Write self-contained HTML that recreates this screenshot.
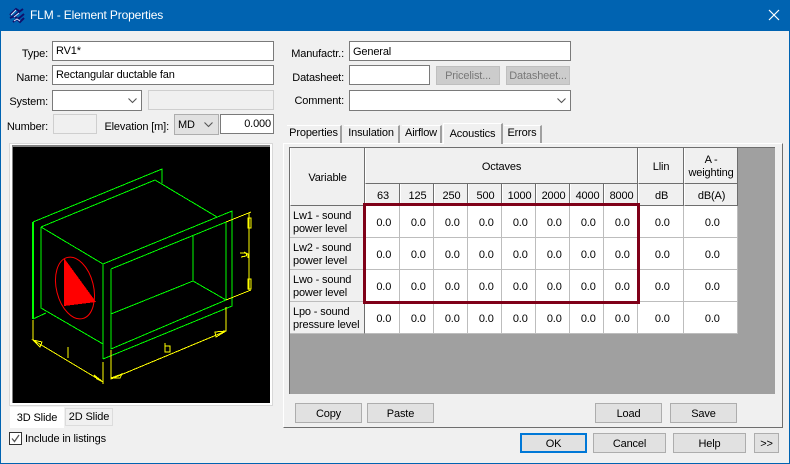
<!DOCTYPE html>
<html><head><meta charset="utf-8"><style>
html,body{margin:0;padding:0}
body{width:790px;height:464px;overflow:hidden;background:#f0f0f0;position:relative;font-family:"Liberation Sans",sans-serif;font-size:11px;letter-spacing:-.15px;color:#000}
div,span{position:absolute;box-sizing:border-box;white-space:nowrap}
.l{height:14px;line-height:16px;text-align:right}
.i{background:#fff;border:1px solid #7a7a7a;height:20px;line-height:19px;padding-left:3px}
.d{background:#f0f0f0;border:1px solid #cfcfcf}
.b{background:#e1e1e1;border:1px solid #adadad;text-align:center;line-height:20px;height:20px}
.t{line-height:14px;text-align:center;background:#f0f0f0;border-right:2px solid #a0a0a0;border-top:1px solid #fff}
table{position:absolute;left:290px;top:148px;border-collapse:separate;border-spacing:0;table-layout:fixed;width:448px;font-size:11px}
td{box-sizing:border-box;padding:3px 0 0 3.5px;text-align:center;background:#fff;border-right:1px solid #bdbdbd;border-bottom:1px solid #bdbdbd;height:32px}
tr.h td{background:#f0f0f0;border-right:1px solid #6e6e6e;border-bottom:1px solid #6e6e6e;border-left:1px solid #fff;height:auto;padding:3px 0 0 0}
tr.h2 td{padding:3px 0 0 1px}
td.v{background:#f0f0f0;text-align:left;padding:3px 0 0 3px;line-height:13px;border-right:1px solid #6e6e6e;border-bottom:1px solid #bdbdbd;white-space:nowrap}
</style></head><body>
<div style="left:0;top:0;width:790px;height:31px;background:#0063b1"></div>
<div style="left:0;top:31px;width:1px;height:433px;background:#0063b1"></div>
<div style="left:789px;top:31px;width:1px;height:433px;background:#0063b1"></div>
<div style="left:0;top:463px;width:790px;height:1px;background:#0063b1"></div>
<svg style="position:absolute;left:8px;top:6px" width="18" height="18" viewBox="0 0 18 18"><path d="M2 9L8 3L11 5M5 11L11 6L15 3M2 12L6 10L10 13L16 8M5 16L9 13L12 16L16 12" fill="none" stroke="#10106a" stroke-width="2"/><path d="M3 9L8 4M6 11L11 7M6 15L9 13L12 15" fill="none" stroke="#d8e4ff" stroke-width="1"/></svg>
<div style="left:30px;top:7px;height:17px;line-height:17px;font-size:12px;color:#fff;letter-spacing:-.15px">FLM - Element Properties</div>
<svg style="position:absolute;left:768px;top:9px" width="12" height="12" viewBox="0 0 12 12"><path d="M1 1L11 11M11 1L1 11" stroke="#fff" stroke-width="1.2"/></svg>

<div class="l" style="left:0;width:48px;top:46px">Type:</div>
<div class="i" style="left:52px;top:41px;width:222px">RV1*</div>
<div class="l" style="left:0;width:48px;top:70px">Name:</div>
<div class="i" style="left:52px;top:65px;width:222px">Rectangular ductable fan</div>
<div class="l" style="left:0;width:48px;top:94px">System:</div>
<div class="i" style="left:52px;top:90px;width:90px;height:21px"></div>
<svg style="position:absolute;left:127px;top:97px" width="11" height="7"><path d="M1.5 1.5L5.5 5.5L9.5 1.5" fill="none" stroke="#555" stroke-width="1.1"/></svg>
<div class="d" style="left:148px;top:90px;width:126px;height:20px"></div>
<div class="l" style="left:0;width:48px;top:119px">Number:</div>
<div class="d" style="left:53px;top:114px;width:44px;height:20px"></div>
<div class="l" style="left:100px;width:69px;top:119px">Elevation [m]:</div>
<div style="left:174px;top:114px;width:45px;height:21px;background:#e1e1e1;border:1px solid #adadad;line-height:21px;padding-left:3px">MD</div>
<svg style="position:absolute;left:203px;top:121px" width="11" height="7"><path d="M1.5 1.5L5.5 5.5L9.5 1.5" fill="none" stroke="#555" stroke-width="1.1"/></svg>
<div class="i" style="left:220px;top:114px;width:54px;text-align:right;padding:0 2px 0 0">0.000</div>

<div class="l" style="left:280px;width:64px;top:46px">Manufactr.:</div>
<div class="i" style="left:349px;top:41px;width:222px;line-height:20px">General</div>
<div class="l" style="left:280px;width:64px;top:70px">Datasheet:</div>
<div class="i" style="left:349px;top:65px;width:81px"></div>
<div class="b" style="left:436px;top:66px;width:64px;height:19px;background:#ccc;border-color:#bfbfbf;color:#787878;line-height:19px">Pricelist...</div>
<div class="b" style="left:506px;top:66px;width:64px;height:19px;background:#ccc;border-color:#bfbfbf;color:#787878;line-height:19px">Datasheet...</div>
<div class="l" style="left:280px;width:64px;top:93px">Comment:</div>
<div class="i" style="left:349px;top:90px;width:222px;height:21px"></div>
<svg style="position:absolute;left:556px;top:97px" width="11" height="7"><path d="M1.5 1.5L5.5 5.5L9.5 1.5" fill="none" stroke="#555" stroke-width="1.1"/></svg>

<div style="left:283px;top:143px;width:500px;height:285px;background:#f0f0f0;border:1px solid;border-color:#fff #6e6e6e #6e6e6e #fff"></div>
<div class="t" style="left:287px;top:125px;width:55px;height:18px">Properties</div>
<div class="t" style="left:344px;top:125px;width:56px;height:18px">Insulation</div>
<div class="t" style="left:402px;top:125px;width:40px;height:18px">Airflow</div>
<div class="t" style="left:443px;top:123px;width:60px;height:21px;line-height:20px;border-left:1px solid #fff">Acoustics</div>
<div class="t" style="left:504px;top:125px;width:38px;height:18px">Errors</div>

<div style="left:289px;top:147px;width:486px;height:247px;background:#a0a0a0;border-left:1px solid #6e6e6e;border-top:1px solid #6e6e6e"></div>
<table><colgroup><col style="width:75px"><col style="width:35px"><col style="width:34px"><col style="width:34px"><col style="width:34px"><col style="width:34px"><col style="width:34px"><col style="width:34px"><col style="width:34px"><col style="width:46px"><col style="width:54px"></colgroup>
<tr class="h" style="height:36px"><td rowspan="2">Variable</td><td colspan="8">Octaves</td><td>Llin</td><td style="line-height:13px;padding-top:2px">A -<br>weighting</td></tr>
<tr class="h h2" style="height:22px"><td>63</td><td>125</td><td>250</td><td>500</td><td>1000</td><td>2000</td><td>4000</td><td>8000</td><td>dB</td><td>dB(A)</td></tr>
<tr><td class="v">Lw1 - sound<br>power level</td><td>0.0</td><td>0.0</td><td>0.0</td><td>0.0</td><td>0.0</td><td>0.0</td><td>0.0</td><td>0.0</td><td>0.0</td><td>0.0</td></tr>
<tr><td class="v">Lw2 - sound<br>power level</td><td>0.0</td><td>0.0</td><td>0.0</td><td>0.0</td><td>0.0</td><td>0.0</td><td>0.0</td><td>0.0</td><td>0.0</td><td>0.0</td></tr>
<tr><td class="v">Lwo - sound<br>power level</td><td>0.0</td><td>0.0</td><td>0.0</td><td>0.0</td><td>0.0</td><td>0.0</td><td>0.0</td><td>0.0</td><td>0.0</td><td>0.0</td></tr>
<tr><td class="v">Lpo - sound<br>pressure level</td><td>0.0</td><td>0.0</td><td>0.0</td><td>0.0</td><td>0.0</td><td>0.0</td><td>0.0</td><td>0.0</td><td>0.0</td><td>0.0</td></tr>
</table>
<div style="left:363px;top:203px;width:277px;height:101px;border:3px solid #7f0018"></div>

<div class="b" style="left:295px;top:403px;width:67px">Copy</div>
<div class="b" style="left:367px;top:403px;width:67px">Paste</div>
<div class="b" style="left:595px;top:403px;width:67px">Load</div>
<div class="b" style="left:670px;top:403px;width:67px">Save</div>
<div class="b" style="left:520px;top:433px;width:67px;border:2px solid #0078d7;line-height:18px">OK</div>
<div class="b" style="left:593px;top:433px;width:73px">Cancel</div>
<div class="b" style="left:673px;top:433px;width:73px">Help</div>
<div class="b" style="left:754px;top:433px;width:25px">&gt;&gt;</div>

<div style="left:9px;top:143px;width:264px;height:263px;background:#fff;border:1px solid #d8d8d8"></div>
<svg style="position:absolute;left:12px;top:145px;background:#000;border-top:2px solid #808080;border-left:1px solid #808080;box-sizing:border-box" width="258" height="258" viewBox="13 147 257 256" shape-rendering="crispEdges">
<g fill="none" stroke="#00ff00" stroke-width="1">
<path d="M33 222L162 169V183M41 227L155 180L217 217M41 227L103 264M41 227V308L103 344M33 319L46 313M103 264V359M103 264L232 211V306L103 359M111 269L226 222V300L111 349V269M193 236V281M111 314L193 281L226 300"/>
<path d="M33 222V319" stroke-width="2"/>
</g>
<g fill="none" stroke="#ffff00" stroke-width="1">
<path d="M33 320V340L103 382M103 362V384M68 347V358M111 350V379L226 331V307M226 222L251 212M226 300L251 290M249 213V290"/>
<path d="M33 340L42 342L40 347ZM103 382L94 375L97 379ZM111 378L122 374L120 378ZM226 331L215 332L216 337ZM248 218H251V228H248ZM248 279H251V289H248Z"/>
<path d="M240 253H245Q248 254 246 256L241 257M244 252L248 254V258M165 343V352H170V346H165"/>
</g>
<ellipse cx="75" cy="288" rx="18.5" ry="31.5" transform="rotate(-14 75 288)" fill="none" stroke="#ff0000" stroke-width="1" shape-rendering="auto"/>
<path d="M64 258L96 302L64 306Z" fill="#ff0000"/>
</svg>
<div style="left:10px;top:407px;width:54px;height:21px;background:#fff;text-align:center;line-height:23px">3D Slide</div>
<div style="left:65px;top:408px;width:48px;height:18px;background:#f0f0f0;border:1px solid #dcdcdc;text-align:center;line-height:17px">2D Slide</div>
<div style="left:9px;top:432px;width:13px;height:13px;background:#fff;border:1px solid #333"></div>
<svg style="position:absolute;left:9px;top:432px" width="13" height="13"><path d="M3 6.5L5.5 9.5L10 3" fill="none" stroke="#555" stroke-width="1.3"/></svg>
<div style="left:25px;top:432px;height:14px;line-height:14px">Include in listings</div>
</body></html>
